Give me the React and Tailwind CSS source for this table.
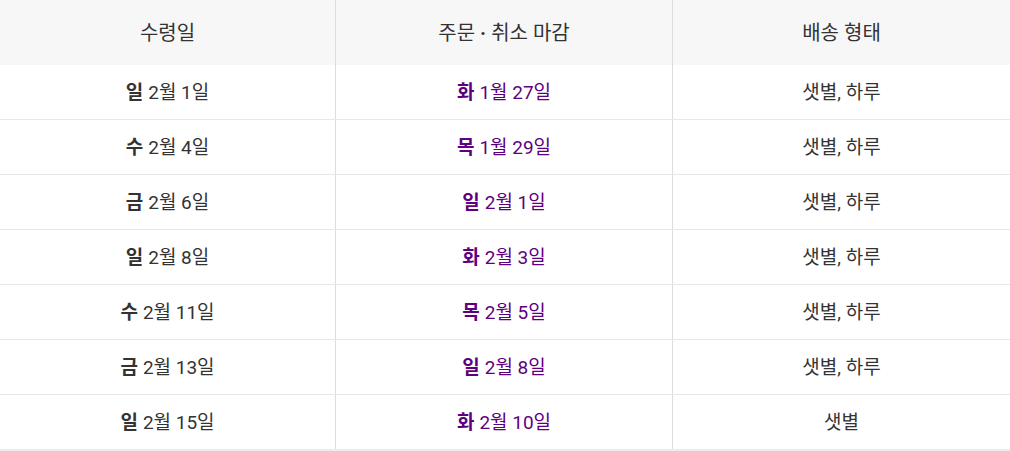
const rows = [
  ["일", "2월 1일", "화", "1월 27일", "샛별, 하루"],
  ["수", "2월 4일", "목", "1월 29일", "샛별, 하루"],
  ["금", "2월 6일", "일", "2월 1일", "샛별, 하루"],
  ["일", "2월 8일", "화", "2월 3일", "샛별, 하루"],
  ["수", "2월 11일", "목", "2월 5일", "샛별, 하루"],
  ["금", "2월 13일", "일", "2월 8일", "샛별, 하루"],
  ["일", "2월 15일", "화", "2월 10일", "샛별"],
];

export default function App() {
  return (
    <div
      className="w-[1010px] h-[451px] bg-white text-[#333]"
      style={{ fontFamily: 'Roboto, "Noto Sans CJK KR", "Noto Sans", sans-serif' }}
    >
      <div className="border-b-[3px] border-[#ececec]">
        <div className="grid grid-cols-[336px_337px_337px] h-[65px] bg-[#f7f7f7] text-[20px]">
          <div className="flex items-center justify-center pt-[1px] border-r border-[#ddd]">수령일</div>
          <div className="flex items-center justify-center pt-[1px] border-r border-[#ddd]">
            주문 <span className="mx-[5px] font-bold">·</span> 취소 마감
          </div>
          <div className="flex items-center justify-center pt-[1px]">배송 형태</div>
        </div>
        {rows.map((r, i) => (
          <div
            key={i}
            className={`grid grid-cols-[336px_337px_337px] text-[19px] ${
              i < rows.length - 1 ? "h-[55px] border-b border-[#e8e8e8]" : "h-[54px]"
            }`}
          >
            <div className="flex items-center justify-center pt-[3px] border-r border-[#ddd]">
              <span className="font-semibold mr-[5px]">{r[0]}</span>
              <span>{r[1]}</span>
            </div>
            <div className="flex items-center justify-center pt-[3px] border-r border-[#ddd] text-[#5f0080]">
              <span className="font-semibold mr-[5px]">{r[2]}</span>
              <span>{r[3]}</span>
            </div>
            <div className="flex items-center justify-center pt-[3px]">{r[4]}</div>
          </div>
        ))}
      </div>
    </div>
  );
}
